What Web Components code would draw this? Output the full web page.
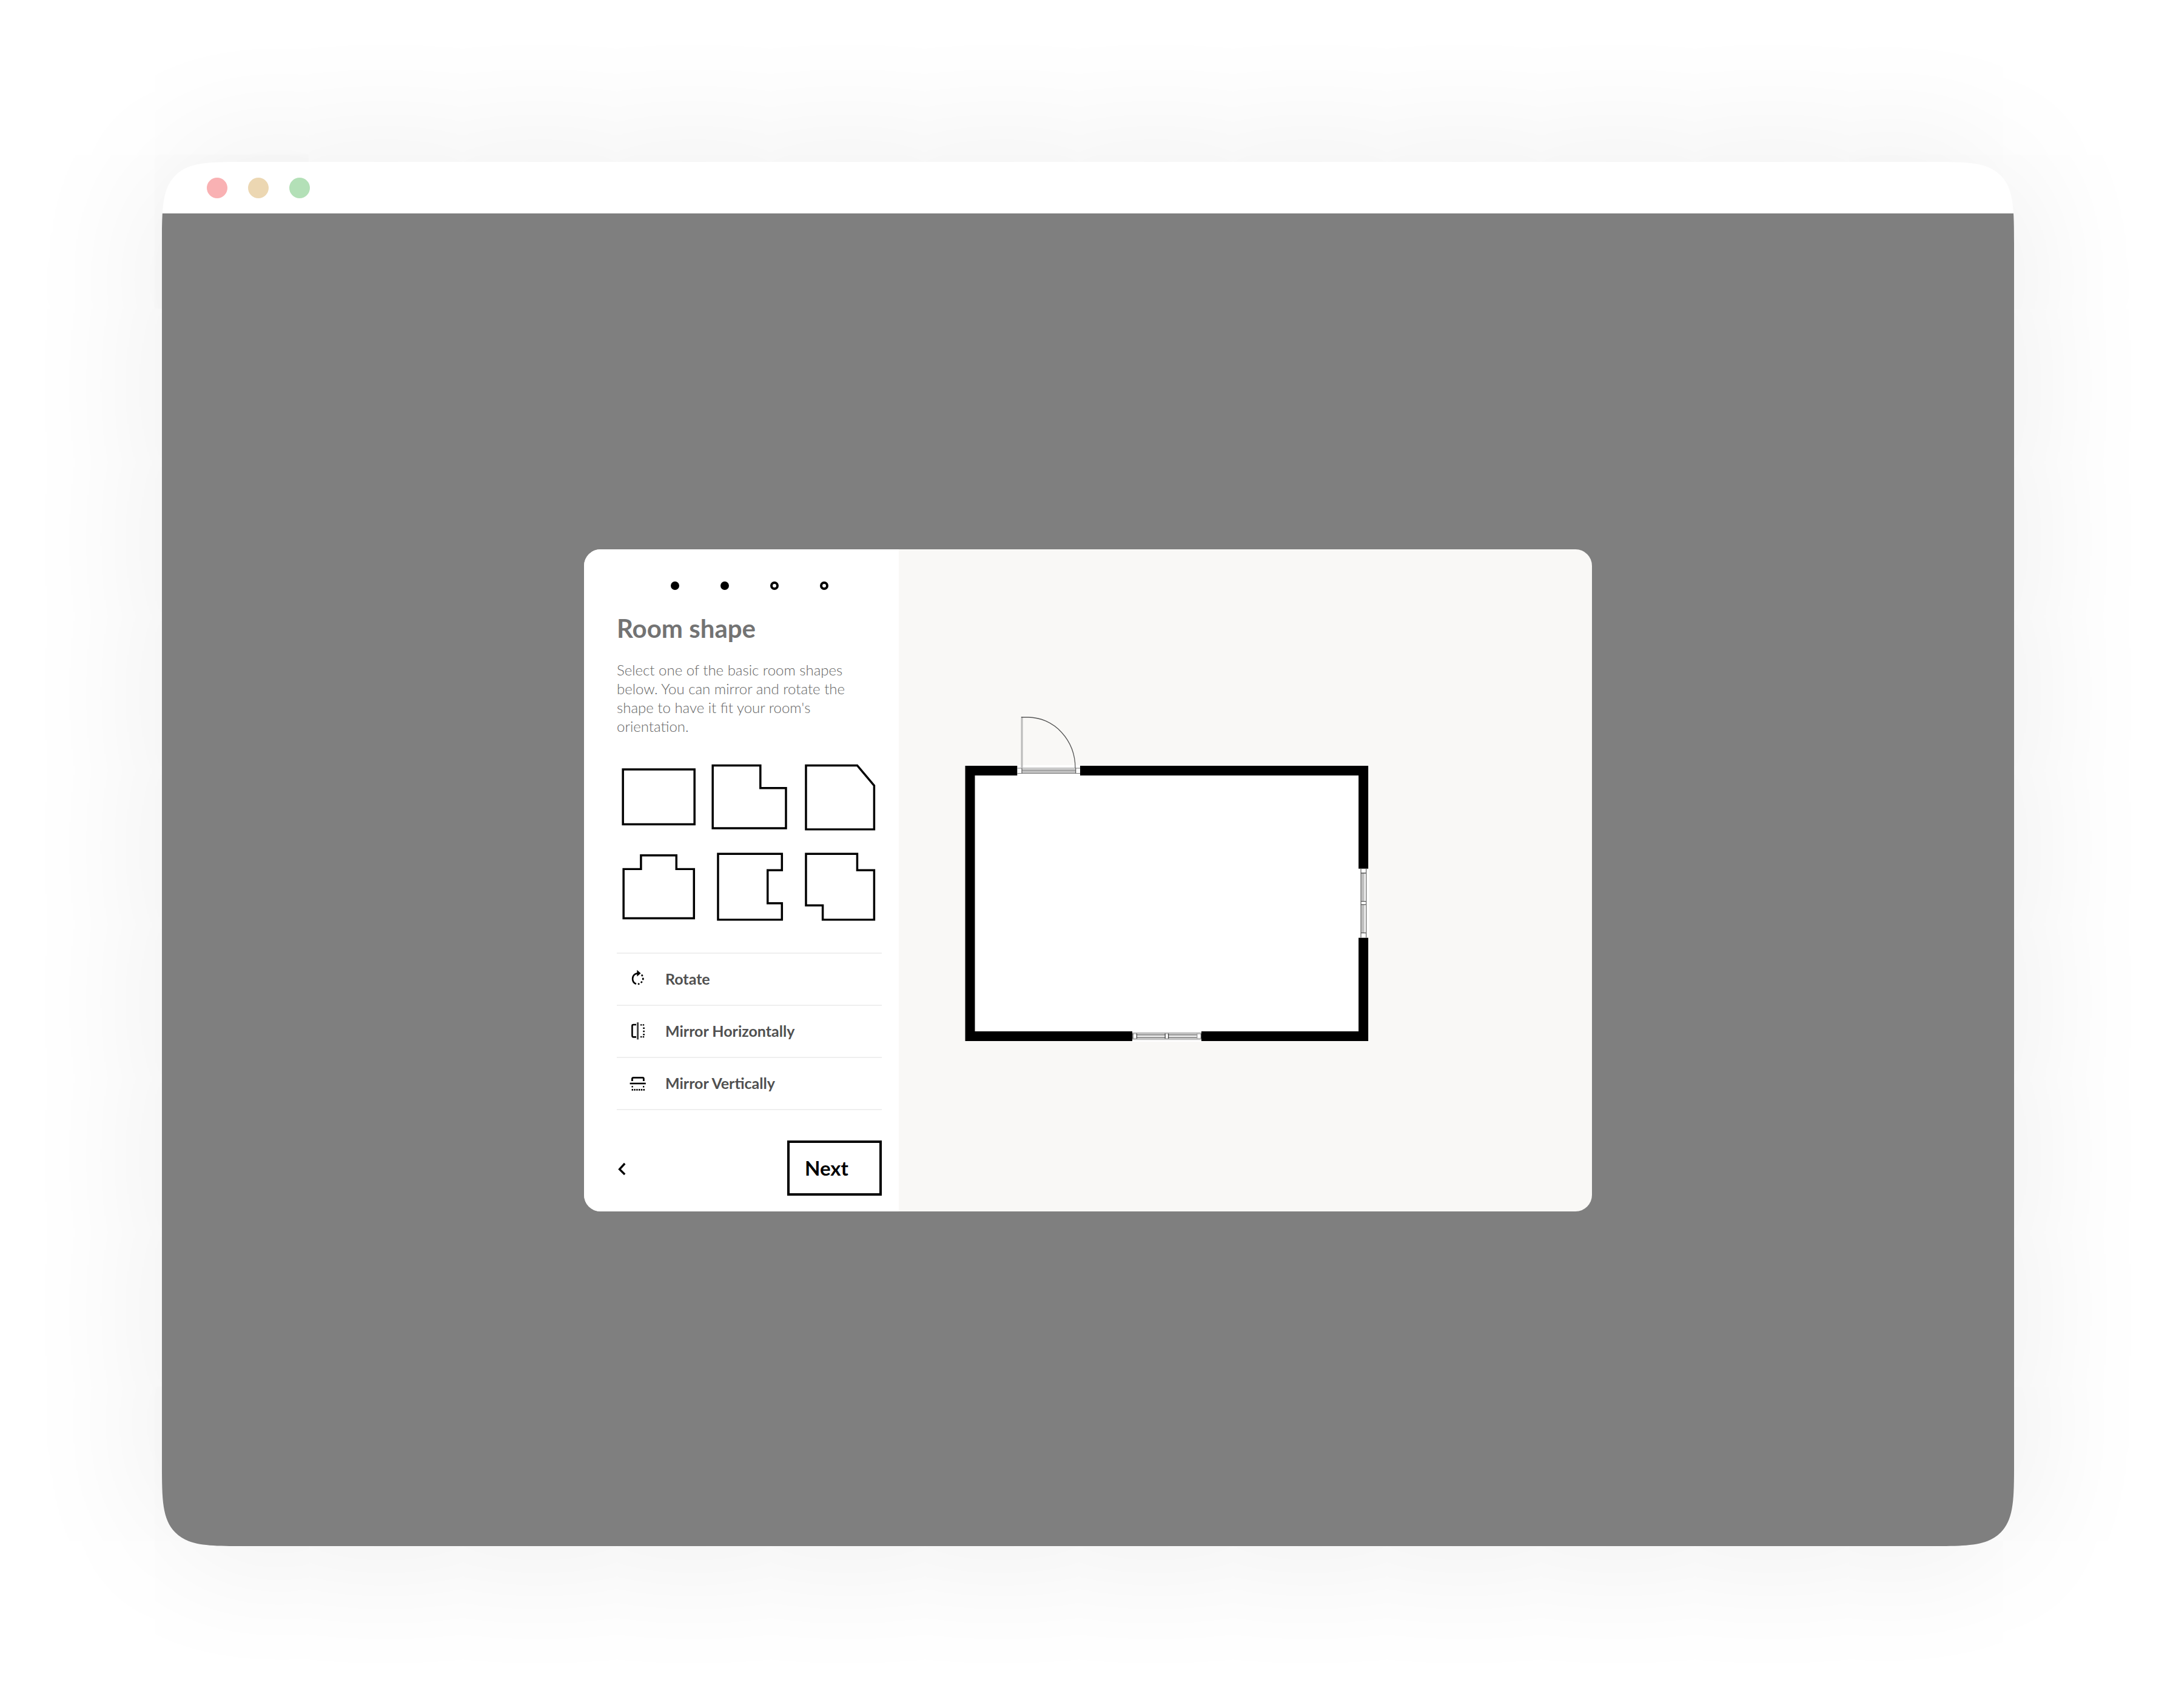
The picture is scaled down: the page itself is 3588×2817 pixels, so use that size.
<!DOCTYPE html>
<html lang="en">
<head>
<meta charset="utf-8">
<title>Room planner</title>
<style>
  html, body { margin: 0; background: #fff; }
  body { font-family: Lato, "Liberation Sans", sans-serif; color: #000; }
</style>
</head>
<body>
<app-desktop>
  <browser-window>
    <room-dialog>
      <step-dots slot="side" total="4" current="2"></step-dots>
      <dialog-intro slot="side">
        <span slot="title">Room shape</span>
        Select one of the basic room shapes below. You can mirror and rotate the shape to have it fit your room's orientation.
      </dialog-intro>
      <shape-grid slot="side"></shape-grid>
      <action-list slot="side">
        <action-row icon="rotate">Rotate</action-row>
        <action-row icon="mirror-h">Mirror Horizontally</action-row>
        <action-row icon="mirror-v">Mirror Vertically</action-row>
      </action-list>
      <dialog-footer slot="side">Next</dialog-footer>
      <floor-plan slot="stage"></floor-plan>
    </room-dialog>
  </browser-window>
</app-desktop>

<script>
  const define = (name, render) => customElements.define(name, class extends HTMLElement {
    constructor() {
      super();
      this.attachShadow({ mode: 'open' });
    }
    connectedCallback() {
      this.shadowRoot.innerHTML = render(this);
    }
  });

  const buttonReset = `
    button { appearance: none; margin: 0; padding: 0; border: 0; background: none;
      color: inherit; font: inherit; text-align: left; cursor: pointer; }
    svg { display: block; }`;

  define('app-desktop', () => `
    <style>
      :host { display: flex; box-sizing: border-box; min-height: 100vh; padding: 267px; }
    </style>
    <slot></slot>`);

  define('browser-window', () => `
    <style>
      :host { display: flex; flex: 1; flex-direction: column; background: #fff; overflow: hidden;
        border-radius: 76px; box-shadow: 0 0 230px rgba(0, 0, 0, .095); }
      @supports (corner-shape: squircle) {
        :host { border-radius: 140px; corner-shape: squircle; }
      }
      header { display: flex; align-items: center; gap: 34px; height: 85px; padding: 0 74px; }
      i { width: 34px; height: 34px; border-radius: 50%; }
      .close { background: #f9b1b3; }
      .min { background: #ecd7b2; }
      .max { background: #b3e0b7; }
      main { display: flex; flex: 1; align-items: center; justify-content: center; background: #7f7f7f; padding-top: 2px; }
    </style>
    <header><i class="close"></i><i class="min"></i><i class="max"></i></header>
    <main><slot></slot></main>`);

  define('room-dialog', () => `
    <style>
      :host { display: flex; width: 100%; max-width: 1662px; border-radius: 27px; overflow: hidden; background: #f9f8f6; }
      aside { display: flex; flex-direction: column; box-sizing: border-box; width: 519px;
        padding: 53px 28px 26px 54px; background: #fff; }
      section { display: flex; flex: 1; }
    </style>
    <aside><slot name="side"></slot></aside>
    <section><slot name="stage"></slot></section>`);

  define('step-dots', el => {
    const total = +el.getAttribute('total'), current = +el.getAttribute('current');
    return `
    <style>
      :host { display: flex; justify-content: center; gap: 68px; margin-bottom: 38px; }
      i { box-sizing: border-box; width: 14px; height: 14px; border: 4px solid #000; border-radius: 50%; }
      .done { background: #000; }
    </style>
    ${Array.from({ length: total }, (_, n) => `<i class="${n < current ? 'done' : ''}"></i>`).join('')}`;
  });

  define('dialog-intro', () => `
    <style>
      :host { display: block; margin-bottom: 33px; }
      h1 { margin: 0 0 28px; font-size: 42px; line-height: 50px; font-weight: 700; color: #737373; }
      p { margin: 0; padding-right: 16px; font-size: 24px; line-height: 31px; font-weight: 300; color: #666; }
    </style>
    <h1><slot name="title"></slot></h1>
    <p><slot></slot></p>`);

  const shapes = [
    ['Rectangle', 'M10.2 23H128.5V113.5H10.2Z'],
    ['L shape', 'M8.2 16.3H87V53.7H129.3V120.2H8.2Z'],
    ['Cut corner', 'M13 16.3H97.7L125.7 49.7V122H13Z'],
    ['T shape', 'M11.2 38.3H40V15.7H98.5V38.3H127.6V119.7H11.2Z'],
    ['U shape', 'M17 13H122.6V40.3H99V94.7H122.6V122H17Z'],
    ['Z shape', 'M13 13H97.7V40.3H125.7V122H40.7V98.3H13Z'],
  ];

  define('shape-grid', () => `
    <style>
      :host { display: grid; grid-template-columns: repeat(3, 1fr); gap: 12px; margin-bottom: 39px; }
      ${buttonReset}
      svg { width: 100%; height: 137px; fill: #fff; stroke: #000; stroke-width: 3.5; }
    </style>
    ${shapes.map(([label, d]) => `
      <button type="button" aria-label="${label}"><svg viewBox="0 0 138 137"><path d="${d}"/></svg></button>`).join('')}`);

  define('action-list', () => `
    <style>
      :host { display: flex; flex-direction: column; margin-bottom: 50px; border-top: 2px solid #efefef; }
    </style>
    <slot></slot>`);

  const icons = {
    'rotate': `
      <path d="M17.5 6.4C10.5 5.8 6.9 10.6 7.1 15.6C7.3 19.6 9.6 22.6 13 23.7" stroke-width="2.6"/>
      <path d="M14.4 .8L20.6 6.2L14.4 11.4Z" fill="#000" stroke="none"/>
      <path d="M15.8 24L18.4 23.6M20.8 21.9L22.8 19.8M24.3 17.2V13.8M23.6 11.1L21.9 8.6" stroke-width="2.6"/>`,
    'mirror-h': `
      <path d="M13 5H8.4Q6.4 5 6.4 7V22.4Q6.4 25.4 8.4 25.4H13" stroke-width="2.6"/>
      <path d="M15.6 1.2V29.4" stroke="#444" stroke-width="3"/>
      <path d="M20 5.4H27M20 25.2H27" stroke-width="2.2" stroke-dasharray="2.4 1.4"/>
      <path d="M25.6 9.6V23" stroke-width="2.6" stroke-dasharray="2.4 2.8"/>`,
    'mirror-v': `
      <path d="M6.4 12V8.4Q6.4 6.3 8.4 6.3H23.8Q25.4 6.3 25.4 8.4V12" stroke-width="2.8"/>
      <path d="M2.6 16H28.8" stroke-width="2.6"/>
      <path d="M6.6 20V22.4M25.2 20V22.4" stroke-width="2.2"/>
      <path d="M5.6 26.4H27" stroke-width="2.6" stroke-dasharray="2.4 1.4"/>`,
  };

  define('action-row', el => `
    <style>
      :host { display: block; border-bottom: 2px solid #efefef; }
      ${buttonReset}
      button { display: flex; align-items: center; gap: 31px; box-sizing: border-box; width: 100%; height: 84px;
        padding: 0 19px 2px; font-size: 25px; line-height: 31px; font-weight: 700; color: #505050; }
      svg { width: 30px; height: 30px; fill: none; stroke: #000; }
    </style>
    <button type="button"><svg viewBox="0 0 30 30" aria-hidden="true">${icons[el.getAttribute('icon')]}</svg><span><slot></slot></span></button>`);

  define('dialog-footer', () => `
    <style>
      :host { display: flex; align-items: center; justify-content: space-between; }
      ${buttonReset}
      .next { box-sizing: border-box; width: 156px; height: 91px; padding: 0 25px 2px; border: 4px solid #000;
        font-size: 33px; line-height: 40px; font-weight: 700; }
      svg { width: 18px; height: 22px; fill: none; stroke: #000; stroke-width: 3.4; }
    </style>
    <button type="button" aria-label="Back"><svg viewBox="0 0 18 22"><path d="M13.2 3L4.6 12.4L13.2 21"/></svg></button>
    <button type="button" class="next"><slot></slot></button>`);

  define('floor-plan', () => `
    <style>
      :host { display: flex; flex: 1; }
      svg { display: block; width: 100%; height: 100%; }
    </style>
    <svg viewBox="0 0 1143 1092" role="img" aria-label="Floor plan" fill="none">
      <rect x="117.5" y="365" width="648.6" height="438" fill="#fff" stroke="#000" stroke-width="16"/>
      <!-- door -->
      <rect x="195.3" y="356" width="103.7" height="18" fill="#fff"/>
      <rect x="203.3" y="364" width="88.5" height="5.3" fill="#bfbfbf"/>
      <path d="M195.3 361H299M203 363.8H292M195.3 369.5H299" stroke="#777" stroke-width="1.2"/>
      <path d="M203 361V369.5M291.7 361V369.5" stroke="#555" stroke-width="1.2"/>
      <path d="M203 276V361" stroke="#bbb" stroke-width="3"/>
      <path d="M202 277H214A78 84 0 0 1 291 361" stroke="#555" stroke-width="1.3"/>
      <!-- right window -->
      <rect x="757" y="526.7" width="18" height="114" fill="#fff"/>
      <rect x="762.3" y="534" width="5.5" height="98.7" fill="#bfbfbf"/>
      <rect x="762.3" y="581" width="8" height="5" fill="#fff"/>
      <path d="M762 526.7V640.7M770.7 526.7V640.7" stroke="#777" stroke-width="1.4"/>
      <path d="M762 534H770.7M762 580.7H770.7M762 585.8H770.7M762 632.7H770.7" stroke="#555" stroke-width="1.3"/>
      <!-- bottom window -->
      <rect x="385" y="794" width="114" height="18" fill="#fff"/>
      <path d="M385 798.2H499M385 807.5H499" stroke="#bfbfbf" stroke-width="3.4"/>
      <path d="M392.3 801H439.3M444.3 801H492M392.3 804.8H439.3M444.3 804.8H492" stroke="#777" stroke-width="1.4"/>
      <path d="M386 798.5V807M392.4 798.5V807M439.2 798.5V807M444.6 798.5V807M498.5 798.5V807" stroke="#444" stroke-width="1.3"/>
      <path d="M491.8 798.5V807" stroke="#999" stroke-width="1.3"/>
    </svg>`);
</script>
</body>
</html>
